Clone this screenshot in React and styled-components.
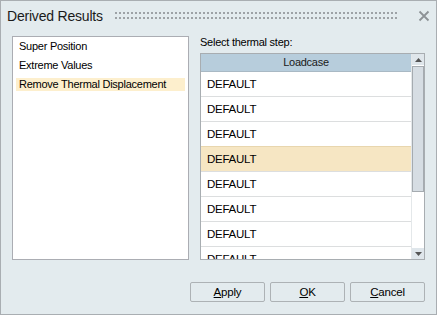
import React from "react"
import styled, { createGlobalStyle } from "styled-components"

const GlobalStyle = createGlobalStyle`
  html, body {
    margin: 0;
    padding: 0;
    background: #e3ebee;
  }
  body {
    font-family: "Liberation Sans", Arial, sans-serif;
    font-size: 11px;
    letter-spacing: -0.25px;
    color: #000;
  }
`

const Dialog = styled.div`
  box-sizing: border-box;
  width: 437px;
  height: 315px;
  border: 1px solid #a9aeb2;
  background: #e3ebee;
  display: flex;
  flex-direction: column;
`

const TitleBar = styled.div`
  display: flex;
  align-items: center;
  height: 30px;
  padding: 0 4px 0 6px;
  gap: 12px;
`

const Title = styled.div`
  font-size: 14px;
  letter-spacing: -0.2px;
  color: #1a1a1a;
  white-space: nowrap;
`

const Grip = styled.svg`
  flex: 1;
  height: 7px;
  margin-top: -2px;
`

const Close = styled.svg`
  width: 14px;
  height: 14px;
  margin-left: 6px;
  margin-right: 1px;
`

const Body = styled.div`
  display: flex;
  gap: 11px;
  padding: 5px 11px 0 11px;
  height: 224px;
`

const ListBox = styled.div`
  box-sizing: border-box;
  width: 177px;
  height: 224px;
  border: 1px solid #abadb3;
  background: #fff;
  padding: 3px 3px;
  display: flex;
  flex-direction: column;
  gap: 6px;
`

const ListItem = styled.div`
  height: 13px;
  line-height: 13px;
  padding-left: 3px;
  white-space: nowrap;
  background: ${p => (p.$selected ? "#fdefcd" : "transparent")};
`

const RightPane = styled.div`
  flex: 1;
  display: flex;
  flex-direction: column;
`

const Label = styled.div`
  height: 17px;
  line-height: 13px;
`

const Grid = styled.div`
  box-sizing: border-box;
  height: 207px;
  border: 1px solid #a8adb1;
  background: #fff;
  display: flex;
  overflow: hidden;
`

const Rows = styled.div`
  flex: 1;
  overflow: hidden;
`

const Header = styled.div`
  height: 17px;
  line-height: 17px;
  text-align: center;
  background: #b7cddc;
  border-bottom: 1px solid #a9b9c4;
  color: #1a1a1a;
`

const Row = styled.div`
  box-sizing: border-box;
  height: 25px;
  line-height: 24px;
  padding-left: 6px;
  font-size: 11.5px;
  border-bottom: 1px solid #dcdedf;
  background: ${p => (p.$selected ? "#f6e6c3" : "#fff")};
  ${p => p.$selected && "border-top: 1px solid #e8d6ae; margin-top: -1px; height: 26px;"}
`

const ScrollBar = styled.div`
  width: 12px;
  display: flex;
  flex-direction: column;
  background: #fff;
  border-left: 1px solid #e4e8ea;
`

const ScrollButton = styled.div`
  height: 11px;
  display: flex;
  align-items: center;
  justify-content: center;
  background: #dfe6eb;
`

const Track = styled.div`
  flex: 1;
  background: #fff;
  padding: 1px 0;
`

const Thumb = styled.div`
  box-sizing: border-box;
  height: 126px;
  background: #d6dde3;
  border: 1px solid #a5abb0;
`

const Footer = styled.div`
  display: flex;
  justify-content: flex-end;
  gap: 5px;
  padding: 22px 11px 0 0;
`

const Button = styled.button`
  box-sizing: border-box;
  width: 75px;
  height: 20px;
  padding: 0;
  border: 1px solid #adb2b5;
  border-radius: 2px;
  background: #e3ebee;
  font-family: "Liberation Sans", Arial, sans-serif;
  font-size: 11.5px;
  letter-spacing: -0.2px;
  color: #000;
  u {
    text-decoration: underline;
  }
`

const Arrow = ({ up }) => (
  <svg width="7" height="4" viewBox="0 0 7 4">
    <path d={up ? "M0 4 L3.5 0 L7 4 Z" : "M0 0 L3.5 4 L7 0 Z"} fill="#555" />
  </svg>
)

const loadcases = Array.from({ length: 8 }, () => "DEFAULT")

export default function App() {
  return (
    <>
      <GlobalStyle />
      <Dialog>
        <TitleBar>
          <Title>Derived Results</Title>
          <Grip>
            <defs>
              <pattern id="grip" width="4" height="5" patternUnits="userSpaceOnUse">
                <rect width="2" height="2" fill="#9da2a6" />
              </pattern>
            </defs>
            <rect width="100%" height="7" fill="url(#grip)" />
          </Grip>
          <Close viewBox="0 0 14 14">
            <path d="M2.5 2.5 L11.5 11.5 M11.5 2.5 L2.5 11.5" stroke="#8d9296" strokeWidth="1.8" />
          </Close>
        </TitleBar>
        <Body>
          <ListBox>
            <ListItem>Super Position</ListItem>
            <ListItem>Extreme Values</ListItem>
            <ListItem $selected>Remove Thermal Displacement</ListItem>
          </ListBox>
          <RightPane>
            <Label>Select thermal step:</Label>
            <Grid>
              <Rows>
                <Header>Loadcase</Header>
                {loadcases.map((name, i) => (
                  <Row key={i} $selected={i === 3}>
                    {name}
                  </Row>
                ))}
              </Rows>
              <ScrollBar>
                <ScrollButton>
                  <Arrow up />
                </ScrollButton>
                <Track>
                  <Thumb />
                </Track>
                <ScrollButton>
                  <Arrow />
                </ScrollButton>
              </ScrollBar>
            </Grid>
          </RightPane>
        </Body>
        <Footer>
          <Button>
            <u>A</u>pply
          </Button>
          <Button>
            <u>O</u>K
          </Button>
          <Button>
            <u>C</u>ancel
          </Button>
        </Footer>
      </Dialog>
    </>
  )
}
